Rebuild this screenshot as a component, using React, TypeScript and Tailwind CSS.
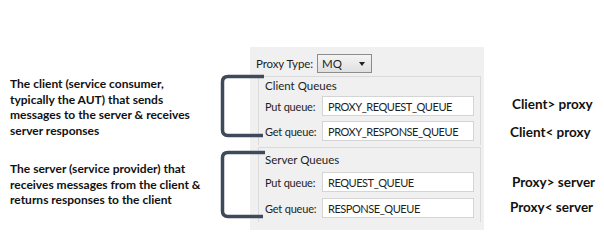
import React from "react";

const uiFont = { fontFamily: 'Lato, "Open Sans", sans-serif' };

function Field({ label, value }: { label: string; value: string }) {
  return (
    <div className="flex items-center h-[20px]">
      <span className="w-[63px] shrink-0 pl-[6px] text-[11px] tracking-[-0.2px] text-[#1e1e1e] leading-none whitespace-nowrap">{label}</span>
      <div className="w-[152px] shrink-0 h-[20px] bg-white border border-[#d4d4d4] flex items-center pl-[5px] text-[11px] tracking-[-0.45px] text-[#1e1e1e] leading-none whitespace-nowrap">
        {value}
      </div>
    </div>
  );
}

export default function App() {
  return (
    <div className="relative w-[604px] h-[242px] bg-white flex overflow-hidden">
      {/* left annotations */}
      <div
        className="w-[250px] shrink-0 pl-[10px] pt-[76px] text-[12px] font-bold text-[#111] leading-[15.7px] whitespace-nowrap"
        style={{ fontFamily: 'Lato, "Open Sans", sans-serif' }}
      >
        <div>
          The client (service consumer,
          <br />
          typically the AUT) that sends
          <br />
          messages to the server &amp; receives
          <br />
          server responses
        </div>
        <div className="mt-[22px]">
          The server (service provider) that
          <br />
          receives messages from the client &amp;
          <br />
          returns responses to the client
        </div>
      </div>

      {/* panel */}
      <div className="mt-[47px] w-[234px] shrink-0 h-[183px] bg-[#f0f0f0] flex flex-col" style={uiFont}>
        <div className="flex items-center h-[19px] mt-[7px] pl-[6px]">
          <span className="w-[61px] shrink-0 text-[11.5px] tracking-[-0.1px] text-[#1e1e1e] leading-none whitespace-nowrap">Proxy Type:</span>
          <div className="w-[55px] h-[19px] border border-[#8c8c8c] bg-gradient-to-b from-[#f4f4f4] to-[#e0e0e0] flex items-center justify-between pl-[4px] pr-[6px]">
            <span className="text-[11.5px] text-[#1e1e1e] leading-none">MQ</span>
            <span className="w-0 h-0 border-l-[3.5px] border-r-[3.5px] border-t-[4px] border-l-transparent border-r-transparent border-t-[#222]" />
          </div>
        </div>

        <div className="ml-[8px] mr-[3px] mt-[3px] h-[69px] border border-[#dadada] border-b-0 flex flex-col">
          <div className="h-[16px] pl-[6px] pt-[2px] text-[11.5px] text-[#1e1e1e] leading-[14px] whitespace-nowrap">Client Queues</div>
          <div className="mt-[3px] flex flex-col gap-[5px]">
            <Field label="Put queue:" value="PROXY_REQUEST_QUEUE" />
            <Field label="Get queue:" value="PROXY_RESPONSE_QUEUE" />
          </div>
        </div>

        <div className="ml-[8px] mr-[3px] mt-[2px] h-[75px] border border-[#dadada] border-b-0 flex flex-col">
          <div className="h-[16px] pl-[6px] pt-[5px] text-[11.5px] text-[#1e1e1e] leading-[14px] whitespace-nowrap">Server Queues</div>
          <div className="mt-[8px] flex flex-col gap-[6px]">
            <Field label="Put queue:" value="REQUEST_QUEUE" />
            <Field label="Get queue:" value="RESPONSE_QUEUE" />
          </div>
        </div>
      </div>

      {/* right labels */}
      <div
        className="flex flex-col pl-[26px] pt-[96px] text-[13.5px] font-bold text-[#111] leading-[16px] whitespace-nowrap"
        style={{ fontFamily: 'Lato, "Open Sans", sans-serif' }}
      >
        <div className="pl-[2px]">Client&gt; proxy</div>
        <div className="mt-[12px]">Client&lt; proxy</div>
        <div className="mt-[34px] pl-[2px]">Proxy&gt; server</div>
        <div className="mt-[9px]">Proxy&lt; server</div>
      </div>

      {/* brackets */}
      <svg className="absolute left-0 top-0 pointer-events-none" width="604" height="242">
        <path
          d="M264 76.5 H228 Q222.5 76.5 222.5 82 V130 Q222.5 135.5 228 135.5 H263"
          fill="none"
          stroke="#3e4a5b"
          strokeWidth="3.5"
        />
        <path
          d="M265 152.5 H228 Q222.5 152.5 222.5 158 V211 Q222.5 216.5 228 216.5 H263"
          fill="none"
          stroke="#3e4a5b"
          strokeWidth="3.5"
        />
      </svg>
    </div>
  );
}
